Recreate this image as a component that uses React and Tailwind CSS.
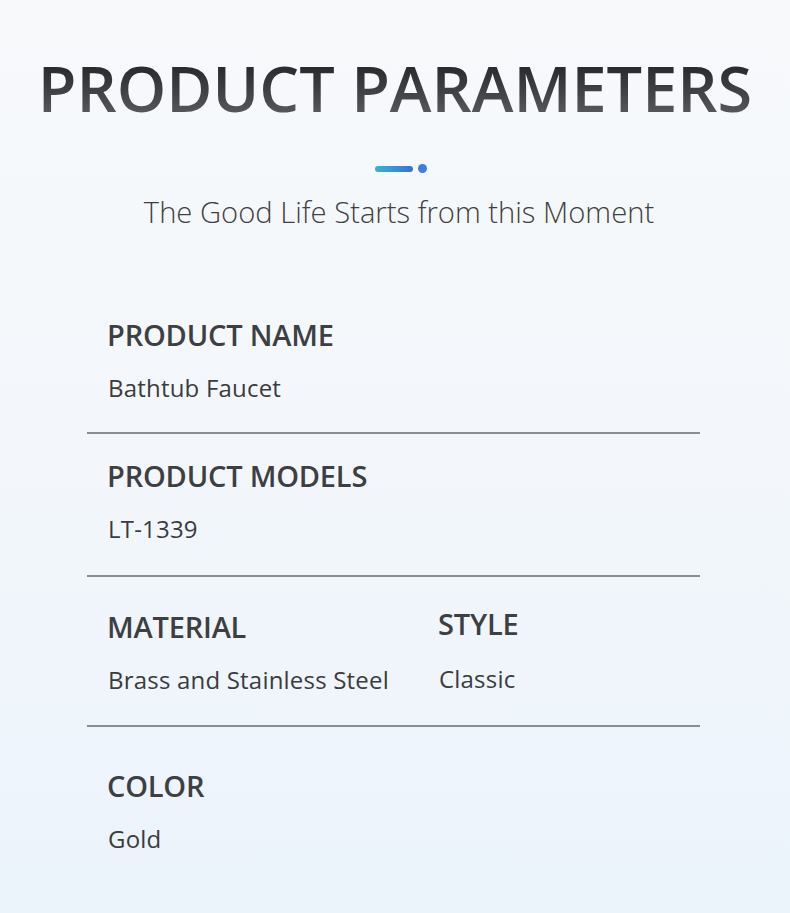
export default function App() {
  const font = { fontFamily: '"Open Sans", "Noto Sans", sans-serif' }

  const Field = ({ label, value, raise = false }) => (
    <div>
      <h3 className={`text-[29px] font-semibold leading-none text-[#3d3f43] tracking-[-0.2px] ${raise ? '-mt-[3px]' : ''}`}>{label}</h3>
      <p className={`pl-[1px] text-[24px] leading-none text-[#3a3c40] tracking-[0.2px] ${raise ? 'mt-[29px]' : 'mt-[27px]'}`}>{value}</p>
    </div>
  )

  return (
    <div
      className="w-[790px] h-[913px] overflow-hidden bg-gradient-to-b from-[#f7f9fb] via-[#f3f7fb] to-[#ebf3fb]"
      style={font}
    >
      {/* Cabecera */}
      <div className="pt-[56px] flex flex-col items-center">
        <h1 className="text-[63px] font-semibold leading-none bg-gradient-to-b from-[#202123] to-[#5c5d60] bg-clip-text text-transparent">
          PRODUCT PARAMETERS
        </h1>
        <div className="mt-[45px] ml-[12px] flex items-center gap-[5px]">
          <div className="w-[38px] h-[6px] rounded-full bg-gradient-to-r from-[#39b3d9] to-[#3a70d9]"></div>
          <div className="w-[9px] h-[9px] rounded-full bg-[#3b7ee0]"></div>
        </div>
        <p className="mt-[25px] ml-[8px] text-[29.2px] font-light leading-none text-[#3f4043]">
          The Good Life Starts from this Moment
        </p>
      </div>

      {/* Parámetros */}
      <div className="mt-[93px] ml-[87px] w-[613px]">
        <div className="pl-[20px] pb-[32px] border-b-2 border-[#8a8d91]">
          <Field label="PRODUCT NAME" value="Bathtub Faucet" />
        </div>
        <div className="pl-[20px] pt-[27px] pb-[34px] border-b-2 border-[#8a8d91]">
          <Field label="PRODUCT MODELS" value="LT-1339" />
        </div>
        <div className="pl-[20px] pt-[35px] pb-[33px] border-b-2 border-[#8a8d91] flex">
          <div className="w-[331px]">
            <Field label="MATERIAL" value="Brass and Stainless Steel" />
          </div>
          <div>
            <Field label="STYLE" value="Classic" raise />
          </div>
        </div>
        <div className="pl-[20px] pt-[44px]">
          <Field label="COLOR" value="Gold" />
        </div>
      </div>
    </div>
  )
}
